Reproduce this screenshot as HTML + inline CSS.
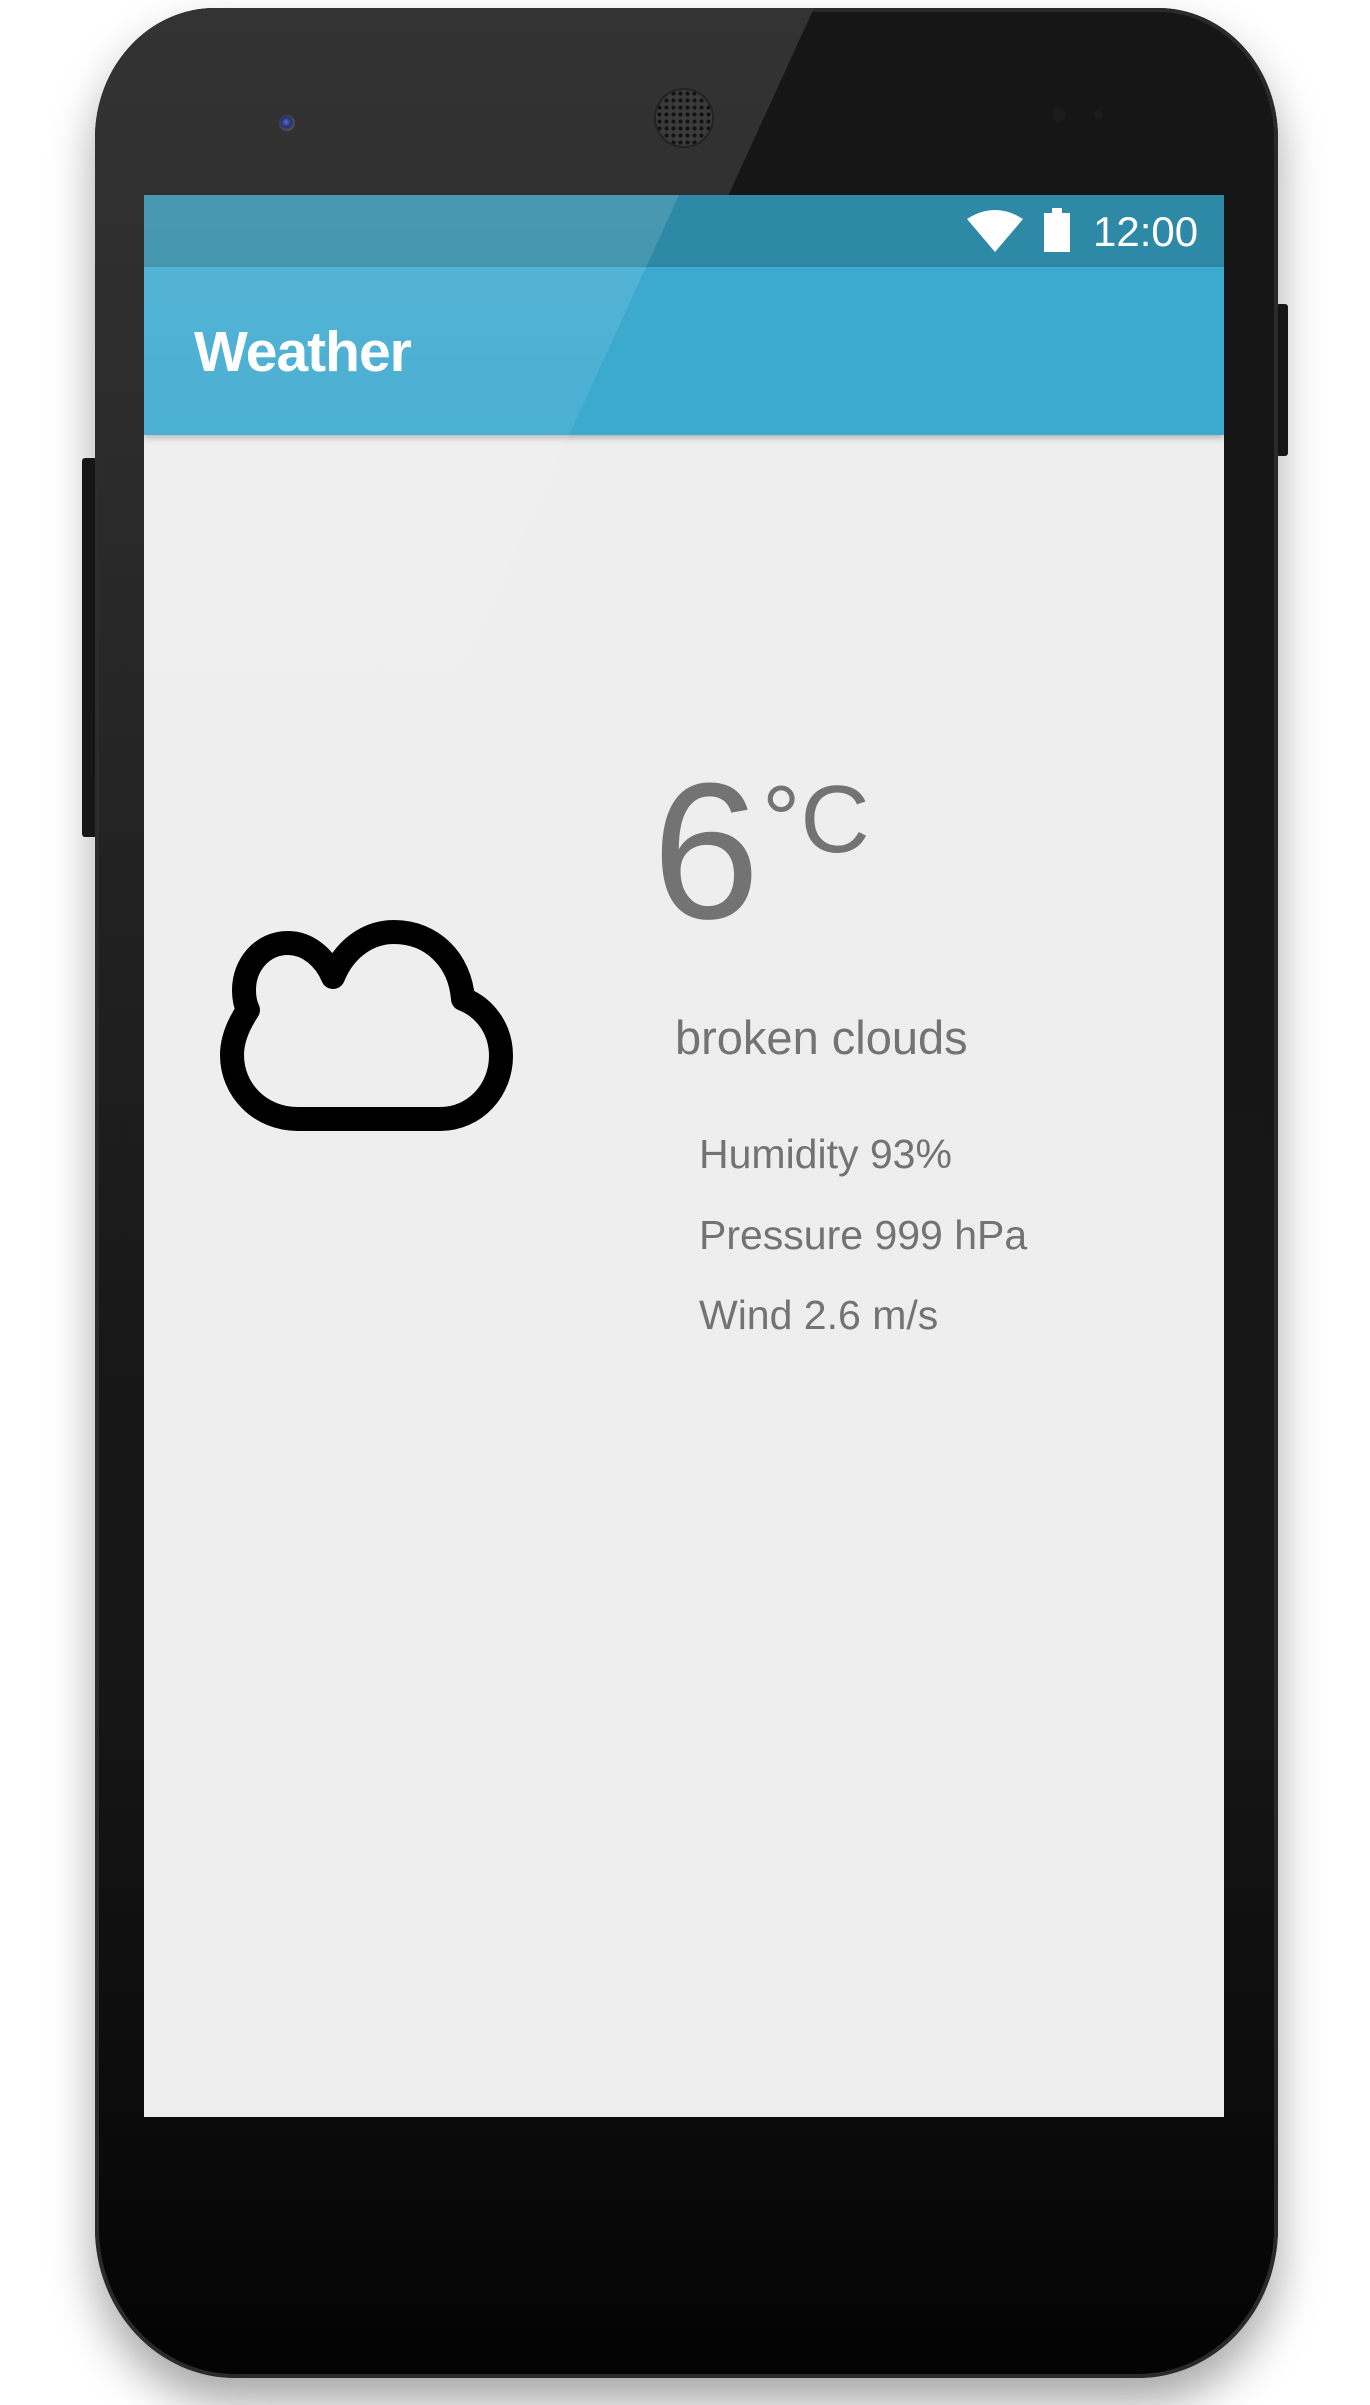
<!DOCTYPE html>
<html><head><meta charset="utf-8"><style>
html,body{margin:0;padding:0;}
body{width:1370px;height:2405px;background:#fff;position:relative;overflow:hidden;font-family:"Liberation Sans",sans-serif;}
.btn{position:absolute;background:#1a1a1a;border-radius:3px;}
.phone{position:absolute;left:95px;top:8px;width:1183px;height:2370px;background:linear-gradient(#161616 0%,#171717 70%,#0c0c0c 88%,#030303 100%);border-radius:120px 120px 140px 140px/130px 130px 150px 150px;box-shadow:0 25px 45px rgba(0,0,0,.35), inset 0 0 0 4px #2a2a2a;overflow:hidden;}
.hl{position:absolute;left:0;top:0;width:1370px;height:1400px;background:linear-gradient(#333 0%,#2c2c2c 30%,rgba(20,20,20,0) 100%);clip-path:polygon(0 0,719px 0,0 1573px);}
.screen{position:absolute;left:144px;top:195px;width:1080px;height:1922px;background:#eeeeee;overflow:hidden;}
.status{position:absolute;left:0;top:0;width:100%;height:72px;background:#2e89a6;}
.bar{position:absolute;left:0;top:72px;width:100%;height:168px;background:#3ca9cf;box-shadow:0 3px 6px rgba(0,0,0,.25);}
.sheen{position:absolute;left:0;top:0;width:100%;height:700px;background:linear-gradient(rgba(255,255,255,.13),rgba(255,255,255,.07) 40%,rgba(255,255,255,0));clip-path:polygon(0 0,535px 0,0 1170px);}
.t{position:absolute;color:#737373;white-space:nowrap;}
</style></head><body>
<div class="btn" style="left:1276px;top:304px;width:12px;height:152px"></div>
<div class="btn" style="left:82px;top:458px;width:15px;height:379px"></div>
<div class="phone">
 <div class="hl"></div>
</div>
<div style="position:absolute;left:279px;top:115px;width:16px;height:16px;border-radius:50%;background:radial-gradient(circle at 45% 45%,#5a6cc0 0,#243070 40%,#555 70%,#333 100%)"></div>
<div style="position:absolute;left:656px;top:90px;width:56px;height:56px;border-radius:50%;background:radial-gradient(#111 1.5px,#3a3a3a 2.5px) 0 0/7px 7px;box-shadow:0 0 0 2px #222"></div>
<div style="position:absolute;left:1052px;top:108px;width:14px;height:14px;border-radius:50%;background:#1c1c1c"></div>
<div style="position:absolute;left:1094px;top:110px;width:9px;height:9px;border-radius:50%;background:#1c1c1c"></div>
<div class="screen">
 <div class="status"></div>
 <div class="bar"></div>
 <div class="sheen"></div>
 <svg style="position:absolute;left:823px;top:14px" width="56" height="43" viewBox="0 0 56 43"><path d="M0 10 Q28 -8 56 10 L28 43 Z" fill="#fff"/></svg>
 <div style="position:absolute;left:900px;top:18px;width:26px;height:39px;background:#fff"></div>
 <div style="position:absolute;left:908px;top:13px;width:10px;height:6px;background:#fff"></div>
 <div style="position:absolute;left:949px;top:13px;color:#fff;font-size:42px;">12:00</div>
 <div style="position:absolute;left:50px;top:124px;color:#fff;font-size:57px;font-weight:bold;letter-spacing:-1px;">Weather</div>
</div>
<svg style="position:absolute;left:0;top:0" width="1370" height="2405">
 <path d="M298,1119 L440,1119 C475,1119 501,1090 501,1056 C501,1030 486,1008 463,999 C460,960 432,932 394,932 C365,932 343,952 333,977 C325,958 308,943 288,943 C262,943 244,965 244,990 C244,997 245,1004 248,1010 C238,1025 232,1040 232,1055 C232,1090 260,1119 298,1119 Z" fill="none" stroke="#000" stroke-width="24" stroke-linejoin="round"/>
</svg>
<div class="t" style="left:652px;top:755px;font-size:194px;line-height:1;">6</div>
<div class="t" style="left:762px;top:772px;font-size:96px;line-height:1;">°C</div>
<div class="t" style="left:675px;top:1014px;font-size:47px;line-height:1;">broken clouds</div>
<div class="t" style="left:699px;top:1134px;font-size:41px;line-height:1;">Humidity 93%</div>
<div class="t" style="left:699px;top:1215px;font-size:41px;line-height:1;">Pressure 999 hPa</div>
<div class="t" style="left:699px;top:1295px;font-size:41px;line-height:1;">Wind 2.6 m/s</div>
</body></html>
